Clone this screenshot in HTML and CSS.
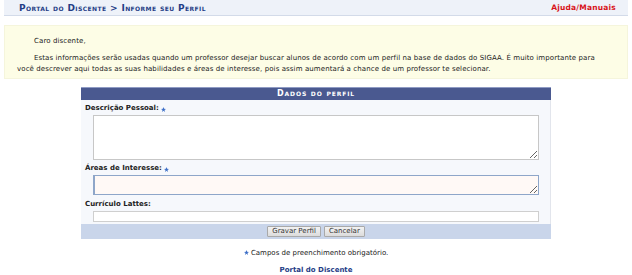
FILE: index.html
```html
<!DOCTYPE html>
<html lang="pt-BR">
<head>
    <meta charset="UTF-8">
    <title>Informe seu Perfil</title>
    <link rel="stylesheet" href="styles.css">
</head>
<body>
    <div class="topbar">
        <h2>Portal do Discente &gt; Informe seu Perfil</h2>
        <a href="#" class="ajuda">Ajuda/Manuais</a>
    </div>

    <div class="notice">
        <p class="indent">Caro discente,</p>
        <p class="indent">Estas informações serão usadas quando um professor desejar buscar alunos de acordo com um perfil na base de dados do SIGAA. É muito importante para você descrever aqui todas as suas habilidades e áreas de interesse, pois assim aumentará a chance de um professor te selecionar.</p>
    </div>

    <form class="formulario">
        <div class="caption">Dados do perfil</div>
        <div class="campos">
            <label class="rotulo">Descrição Pessoal: <span class="req"><svg viewBox="0 0 10 10"><polygon points="5,0 6.3,3.6 10,3.8 7,6.1 8.1,9.8 5,7.6 1.9,9.8 3,6.1 0,3.8 3.7,3.6"/></svg></span></label>
            <textarea class="area alta"></textarea>

            <label class="rotulo">Áreas de Interesse: <span class="req"><svg viewBox="0 0 10 10"><polygon points="5,0 6.3,3.6 10,3.8 7,6.1 8.1,9.8 5,7.6 1.9,9.8 3,6.1 0,3.8 3.7,3.6"/></svg></span></label>
            <textarea class="area baixa foco"></textarea>

            <label class="rotulo">Currículo Lattes:</label>
            <input type="text" class="texto">
        </div>
        <div class="rodape">
            <button type="button">Gravar Perfil</button>
            <button type="button">Cancelar</button>
        </div>
    </form>

    <p class="obrigatorio"><span class="req"><svg viewBox="0 0 10 10"><polygon points="5,0 6.3,3.6 10,3.8 7,6.1 8.1,9.8 5,7.6 1.9,9.8 3,6.1 0,3.8 3.7,3.6"/></svg></span> Campos de preenchimento obrigatório.</p>

    <p class="voltar"><a href="#">Portal do Discente</a></p>
</body>
</html>
```

FILE: styles.css
```css
body {
    font-family: "DejaVu Sans", Verdana, sans-serif;
    font-size: 7px;
    color: #222;
    margin: 0 4px;
    background: #fff;
}

.topbar {
    display: flex;
    justify-content: space-between;
    align-items: center;
    height: 15px;
    background-color: #eef2f9;
    border-bottom: 1px solid #d3dbe9;
    padding: 0 16px 0 15px;
    margin-right: -4px;
}

.topbar h2 {
    margin: 0;
    font-size: 9px;
    font-variant: small-caps;
    font-weight: bold;
    letter-spacing: 0.4px;
    color: #1f3d86;
}

.ajuda {
    color: #d8141a;
    font-weight: bold;
    font-size: 7.5px;
    letter-spacing: 0.2px;
    text-decoration: none;
}

.notice {
    margin-top: 9px;
    background-color: #fdfde6;
    border: 1px solid #f5f5dc;
    padding: 10px 18px 2px 12px;
    height: 40px;
}

.notice p {
    margin: 0 0 6px;
    line-height: 11px;
    letter-spacing: 0.1px;
}

.notice .indent {
    text-indent: 17px;
}

.formulario {
    width: 470px;
    margin: 8px auto 0;
}

.caption {
    height: 12px;
    line-height: 12px;
    background-color: #4a5990;
    border-top: 1px solid #8f9bc4;
    color: #fff;
    font-weight: bold;
    font-variant: small-caps;
    font-size: 8px;
    letter-spacing: 0.9px;
    text-align: center;
}

.campos {
    display: flex;
    flex-direction: column;
    background-color: #f6f8fc;
    border-right: 1px solid #e2e5ec;
    padding: 0 11px 2px 12px;
}

.rotulo {
    display: flex;
    align-items: center;
    gap: 2px;
    height: 15px;
    margin-left: -8px;
    font-weight: bold;
    color: #222;
}

.req {
    display: inline-flex;
}

.req svg {
    width: 5px;
    height: 5px;
    fill: #3d6fc7;
    margin-top: 4px;
}

.area {
    display: block;
    box-sizing: border-box;
    width: 100%;
    border: 1px solid #c7c7c7;
    background: #fff;
    font-family: inherit;
    font-size: 7px;
    margin: 0;
    padding: 1px;
}

.alta {
    height: 45px;
}

.baixa {
    height: 20px;
    margin-bottom: 1px;
}

.foco {
    background-color: #fff9f6;
    border-color: #8ea6c9;
    border-left: 2px solid #8ea6c9;
}

.texto {
    display: block;
    box-sizing: border-box;
    width: 100%;
    height: 11px;
    border: 1px solid #cfcfcf;
    background: #fff;
    margin: 0;
    padding: 0;
}

.rodape {
    display: flex;
    justify-content: center;
    gap: 3px;
    height: 15px;
    align-items: center;
    background-color: #c9d5ea;
}

.rodape button {
    font-family: inherit;
    font-size: 7px;
    color: #333;
    height: 11px;
    padding: 0 4px;
    background: linear-gradient(#f2f2f2, #dcdcdc);
    border: 1px solid #a9a9a9;
    border-radius: 1px;
    line-height: 9px;
}

.obrigatorio {
    margin: 8px 0 0;
    text-align: center;
    line-height: 11px;
}

.obrigatorio .req svg {
    margin-top: 3px;
}

.voltar {
    margin: 7px 0 0;
    text-align: center;
}

.voltar a {
    color: #1f3d86;
    font-weight: bold;
    text-decoration: none;
}
```
